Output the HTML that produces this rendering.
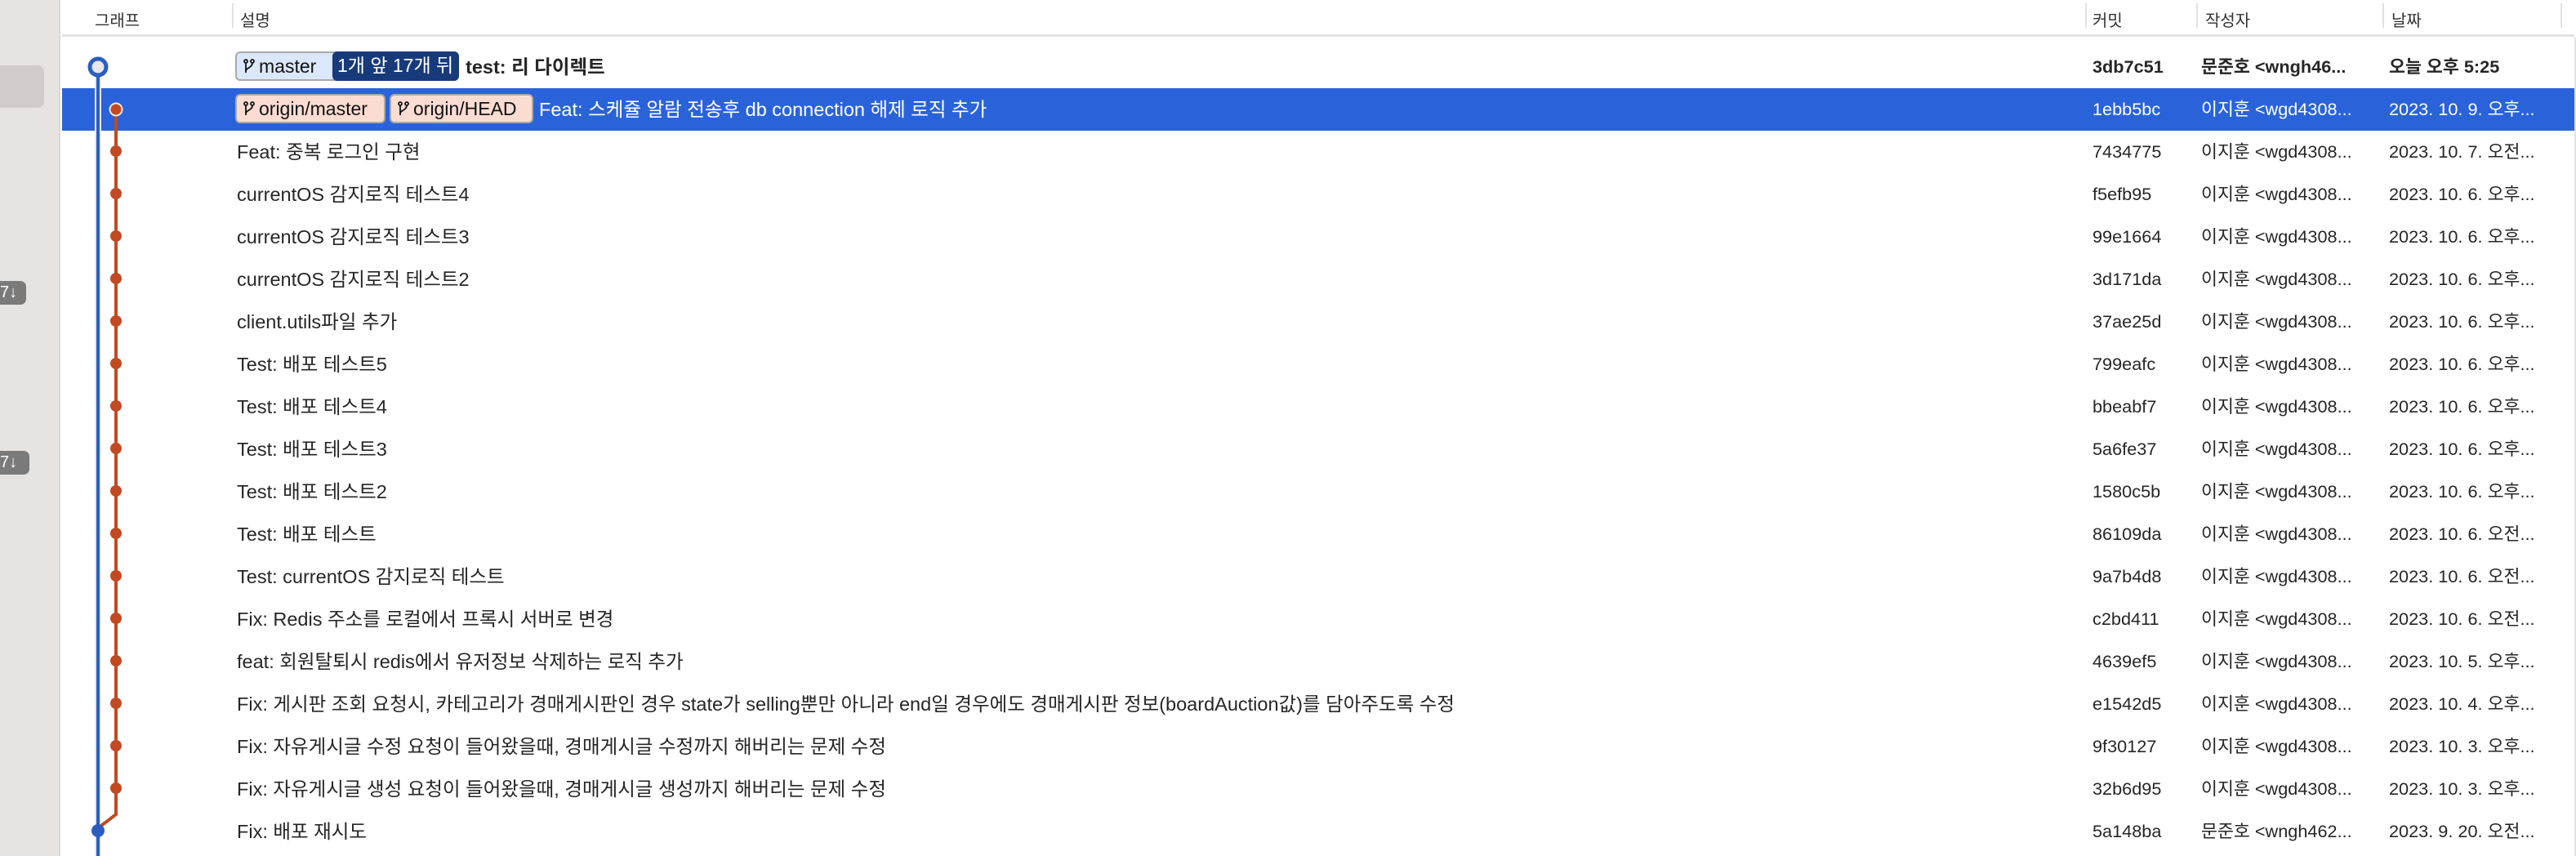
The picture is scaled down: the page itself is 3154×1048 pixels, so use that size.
<!DOCTYPE html>
<html><head><meta charset="utf-8"><style>
*{margin:0;padding:0;box-sizing:border-box}
body{width:3154px;height:1048px;background:#fff;position:relative;overflow:hidden;font-family:"Liberation Sans","Noto Sans CJK KR",sans-serif;font-size:21.7px;color:#262626}
.side{position:absolute;left:0;top:0;width:74px;height:1048px;background:#e7e3e0;border-right:2px solid #dcd8d5}
.sbox{position:absolute;left:0;top:80px;width:54px;height:52px;background:#d1ccc9;border-radius:0 8px 8px 0}
.cnt{position:absolute;left:0;height:29px;background:#7a7a7a;color:#fff;border-radius:0 7px 7px 0;font-size:20px;line-height:29px;padding:0 6px 0 0}
.hdr{position:absolute;left:76px;top:0;width:3076px;height:45px;border-bottom:3px solid #e3e3e3;font-size:20px;color:#333}
.hdr span{position:absolute;top:9px}
.dv{position:absolute;top:4px;width:2px;height:30px;background:#e2e2e2}
.row{position:absolute;left:76px;width:3076px;height:52px;line-height:52px;white-space:nowrap}
.row span{position:absolute;top:0}
.sel{background:#2a63d9;color:#fff}
.b .m,.b .c,.b .a,.b .d{font-weight:bold}
.m{left:214px;font-size:23.5px}.c{left:2486px}.a{left:2619px}.d{left:2849px}
.badge{position:absolute;top:7px;height:36px;line-height:32px;border:2px solid #a9a9a9;border-radius:6px;font-size:23px;color:#111;padding-left:8px}
.br{display:inline-block;width:14px;height:22px;vertical-align:-3px;margin-right:5px}
</style></head><body>
<div class="side"><div class="sbox"></div><div class="cnt" style="top:344px;width:32px">7↓</div><div class="cnt" style="top:552px;width:36px">7↓</div></div>
<div style="position:absolute;right:0;top:46px;width:2px;height:1002px;background:#e4e4e4"></div>
<div class="hdr"><span style="left:40px">그래프</span><div class="dv" style="left:208px"></div><span style="left:218px">설명</span>
<div class="dv" style="left:2477px"></div><span style="left:2486px">커밋</span>
<div class="dv" style="left:2613px"></div><span style="left:2624px">작성자</span>
<div class="dv" style="left:2841px"></div><span style="left:2852px">날짜</span>
<div class="dv" style="left:3059px"></div></div>

<div class="row b" style="top:56px"><span class="m" style="left:494px">test: 리 다이렉트</span><span class="c">3db7c51</span><span class="a">문준호 &lt;wngh46...</span><span class="d">오늘 오후 5:25</span>
<div class="badge" style="left:212px;width:274px;background:#dbe8fb"><svg class="br" viewBox="0 0 14 22"><g fill="none" stroke="#111" stroke-width="1.8"><circle cx="3" cy="5" r="2"/><circle cx="11" cy="5" r="2"/><path d="M3 7V19M11 7c0 6-8 6-8 10"/></g></svg>master<div style="position:absolute;left:117px;top:-2px;height:36px;width:155px;background:#173a7a;color:#fff;border-radius:6px;padding-left:6px;line-height:34px;white-space:nowrap">1개 앞 17개 뒤</div></div></div>
<div class="row sel" style="top:108px"><span class="m" style="left:584px">Feat: 스케쥴 알람 전송후 db connection 해제 로직 추가</span><span class="c">1ebb5bc</span><span class="a">이지훈 &lt;wgd4308...</span><span class="d">2023. 10. 9. 오후...</span>
<div class="badge" style="left:212px;width:184px;background:#fbdcd3"><svg class="br" viewBox="0 0 14 22"><g fill="none" stroke="#111" stroke-width="1.8"><circle cx="3" cy="5" r="2"/><circle cx="11" cy="5" r="2"/><path d="M3 7V19M11 7c0 6-8 6-8 10"/></g></svg>origin/master</div>
<div class="badge" style="left:401px;width:176px;background:#fbdcd3"><svg class="br" viewBox="0 0 14 22"><g fill="none" stroke="#111" stroke-width="1.8"><circle cx="3" cy="5" r="2"/><circle cx="11" cy="5" r="2"/><path d="M3 7V19M11 7c0 6-8 6-8 10"/></g></svg>origin/HEAD</div></div>
<div class="row" style="top:160px"><span class="m">Feat: 중복 로그인 구현</span><span class="c">7434775</span><span class="a">이지훈 &lt;wgd4308...</span><span class="d">2023. 10. 7. 오전...</span></div>
<div class="row" style="top:212px"><span class="m">currentOS 감지로직 테스트4</span><span class="c">f5efb95</span><span class="a">이지훈 &lt;wgd4308...</span><span class="d">2023. 10. 6. 오후...</span></div>
<div class="row" style="top:264px"><span class="m">currentOS 감지로직 테스트3</span><span class="c">99e1664</span><span class="a">이지훈 &lt;wgd4308...</span><span class="d">2023. 10. 6. 오후...</span></div>
<div class="row" style="top:316px"><span class="m">currentOS 감지로직 테스트2</span><span class="c">3d171da</span><span class="a">이지훈 &lt;wgd4308...</span><span class="d">2023. 10. 6. 오후...</span></div>
<div class="row" style="top:368px"><span class="m">client.utils파일 추가</span><span class="c">37ae25d</span><span class="a">이지훈 &lt;wgd4308...</span><span class="d">2023. 10. 6. 오후...</span></div>
<div class="row" style="top:420px"><span class="m">Test: 배포 테스트5</span><span class="c">799eafc</span><span class="a">이지훈 &lt;wgd4308...</span><span class="d">2023. 10. 6. 오후...</span></div>
<div class="row" style="top:472px"><span class="m">Test: 배포 테스트4</span><span class="c">bbeabf7</span><span class="a">이지훈 &lt;wgd4308...</span><span class="d">2023. 10. 6. 오후...</span></div>
<div class="row" style="top:524px"><span class="m">Test: 배포 테스트3</span><span class="c">5a6fe37</span><span class="a">이지훈 &lt;wgd4308...</span><span class="d">2023. 10. 6. 오후...</span></div>
<div class="row" style="top:576px"><span class="m">Test: 배포 테스트2</span><span class="c">1580c5b</span><span class="a">이지훈 &lt;wgd4308...</span><span class="d">2023. 10. 6. 오후...</span></div>
<div class="row" style="top:628px"><span class="m">Test: 배포 테스트</span><span class="c">86109da</span><span class="a">이지훈 &lt;wgd4308...</span><span class="d">2023. 10. 6. 오전...</span></div>
<div class="row" style="top:680px"><span class="m">Test: currentOS 감지로직 테스트</span><span class="c">9a7b4d8</span><span class="a">이지훈 &lt;wgd4308...</span><span class="d">2023. 10. 6. 오전...</span></div>
<div class="row" style="top:732px"><span class="m">Fix: Redis 주소를 로컬에서 프록시 서버로 변경</span><span class="c">c2bd411</span><span class="a">이지훈 &lt;wgd4308...</span><span class="d">2023. 10. 6. 오전...</span></div>
<div class="row" style="top:784px"><span class="m">feat: 회원탈퇴시 redis에서 유저정보 삭제하는 로직 추가</span><span class="c">4639ef5</span><span class="a">이지훈 &lt;wgd4308...</span><span class="d">2023. 10. 5. 오후...</span></div>
<div class="row" style="top:836px"><span class="m">Fix: 게시판 조회 요청시, 카테고리가 경매게시판인 경우 state가 selling뿐만 아니라 end일 경우에도 경매게시판 정보(boardAuction값)를 담아주도록 수정</span><span class="c">e1542d5</span><span class="a">이지훈 &lt;wgd4308...</span><span class="d">2023. 10. 4. 오후...</span></div>
<div class="row" style="top:888px"><span class="m">Fix: 자유게시글 수정 요청이 들어왔을때, 경매게시글 수정까지 해버리는 문제 수정</span><span class="c">9f30127</span><span class="a">이지훈 &lt;wgd4308...</span><span class="d">2023. 10. 3. 오후...</span></div>
<div class="row" style="top:940px"><span class="m">Fix: 자유게시글 생성 요청이 들어왔을때, 경매게시글 생성까지 해버리는 문제 수정</span><span class="c">32b6d95</span><span class="a">이지훈 &lt;wgd4308...</span><span class="d">2023. 10. 3. 오후...</span></div>
<div class="row" style="top:992px"><span class="m">Fix: 배포 재시도</span><span class="c">5a148ba</span><span class="a">문준호 &lt;wngh462...</span><span class="d">2023. 9. 20. 오전...</span></div>

<svg style="position:absolute;left:0;top:0" width="300" height="1048">
<path d="M120 82V1048" stroke="#e8e8e8" stroke-width="8"/>
<path d="M120 82V1048" stroke="#2a5fc0" stroke-width="4"/>
<path d="M142 134V997L120 1014" fill="none" stroke="#c14a22" stroke-width="4"/>
<circle cx="120" cy="82" r="10" fill="#e8e8e8" stroke="#2a5fc0" stroke-width="5"/>
<circle cx="142" cy="134" r="7.5" fill="#c14a22" stroke="#f0e6e2" stroke-width="2"/>
<g fill="#c14a22">
<circle cx="142" cy="185" r="7"/><circle cx="142" cy="237" r="7"/><circle cx="142" cy="289" r="7"/><circle cx="142" cy="341" r="7"/><circle cx="142" cy="393" r="7"/><circle cx="142" cy="445" r="7"/><circle cx="142" cy="497" r="7"/><circle cx="142" cy="549" r="7"/><circle cx="142" cy="601" r="7"/><circle cx="142" cy="653" r="7"/><circle cx="142" cy="705" r="7"/><circle cx="142" cy="757" r="7"/><circle cx="142" cy="809" r="7"/><circle cx="142" cy="861" r="7"/><circle cx="142" cy="913" r="7"/><circle cx="142" cy="965" r="7"/></g>
<circle cx="120" cy="1017" r="8" fill="#2a5fc0"/>
</svg>
</body></html>
